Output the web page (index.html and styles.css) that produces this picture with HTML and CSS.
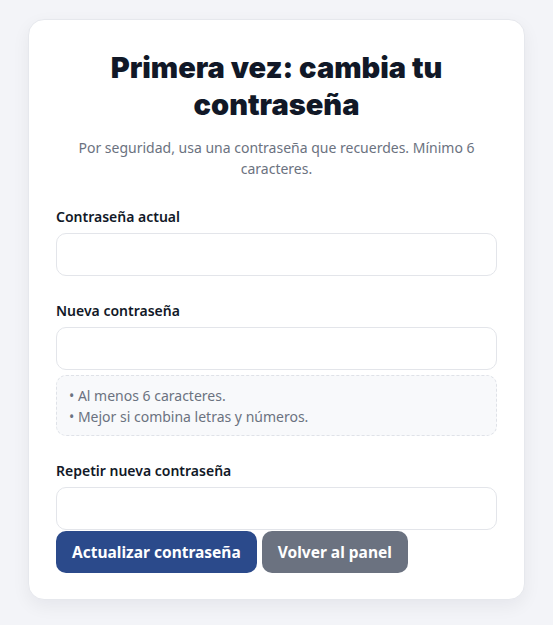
FILE: index.html
```html
<!DOCTYPE html>
<html lang="es">
<head>
<meta charset="utf-8">
<title>Cambiar contraseña</title>
<link rel="stylesheet" href="styles.css">
</head>
<body>
<main class="card">
  <h1 class="title">Primera vez: cambia tu contraseña</h1>
  <p class="subtitle">Por seguridad, usa una contraseña que recuerdes. Mínimo 6 caracteres.</p>
  <form class="form">
    <div class="field">
      <label class="label" for="actual">Contraseña actual</label>
      <input class="input" id="actual" type="password">
    </div>
    <div class="field">
      <label class="label" for="nueva">Nueva contraseña</label>
      <input class="input" id="nueva" type="password">
      <div class="hint">
        <div>• Al menos 6 caracteres.</div>
        <div>• Mejor si combina letras y números.</div>
      </div>
    </div>
    <div class="field field-last">
      <label class="label" for="repetir">Repetir nueva contraseña</label>
      <input class="input" id="repetir" type="password">
    </div>
    <div class="actions">
      <button class="btn btn-primary" type="button">Actualizar contraseña</button>
      <button class="btn btn-secondary" type="button">Volver al panel</button>
    </div>
  </form>
</main>
</body>
</html>
```
FILE: styles.css
```css
* { box-sizing: border-box; }
html, body { margin: 0; padding: 0; }
body {
  background: #f3f4f8;
  font-family: "Noto Sans", "Open Sans", sans-serif;
  color: #111827;
  padding: 19px 28px 24px;
}
.card {
  background: #ffffff;
  border: 1px solid #e6e8ed;
  border-radius: 16px;
  box-shadow: 0 6px 18px rgba(17, 24, 39, 0.06);
  padding: 29px 27px 26px;
}
.title {
  margin: 0;
  text-align: center;
  font-family: "Inter", sans-serif;
  font-weight: 900;
  font-size: 29px;
  line-height: 37px;
  color: #111827;
}
.subtitle {
  margin: 14px 0 0;
  text-align: center;
  font-size: 14px;
  line-height: 21px;
  color: #6b7280;
}
.form { margin-top: 28px; }
.field { margin-bottom: 25px; }
.field-last { margin-bottom: 0; }
.label {
  display: block;
  font-size: 14px;
  line-height: 20px;
  font-weight: 600;
  color: #111827;
  margin-bottom: 6px;
}
.input {
  display: block;
  width: 100%;
  height: 43px;
  border: 1px solid #e3e5ea;
  border-radius: 10px;
  background: #fff;
  padding: 0 12px;
  font: inherit;
}
.hint {
  margin-top: 5px;
  border: 1px dashed #dfe2e8;
  border-radius: 10px;
  background: #f8f9fb;
  padding: 10px 12px 8px;
  font-size: 14px;
  line-height: 20.5px;
  color: #6b7280;
}
.actions {
  display: flex;
  gap: 5px;
  margin-top: 1px;
}
.btn {
  height: 42px;
  border: none;
  border-radius: 10px;
  color: #fff;
  font-family: "Noto Sans", sans-serif;
  font-weight: 700;
  font-size: 15.5px;
  padding: 0 16px;
}
.btn-primary { background: #2b4a8b; }
.btn-secondary { background: #6b7280; }
```
